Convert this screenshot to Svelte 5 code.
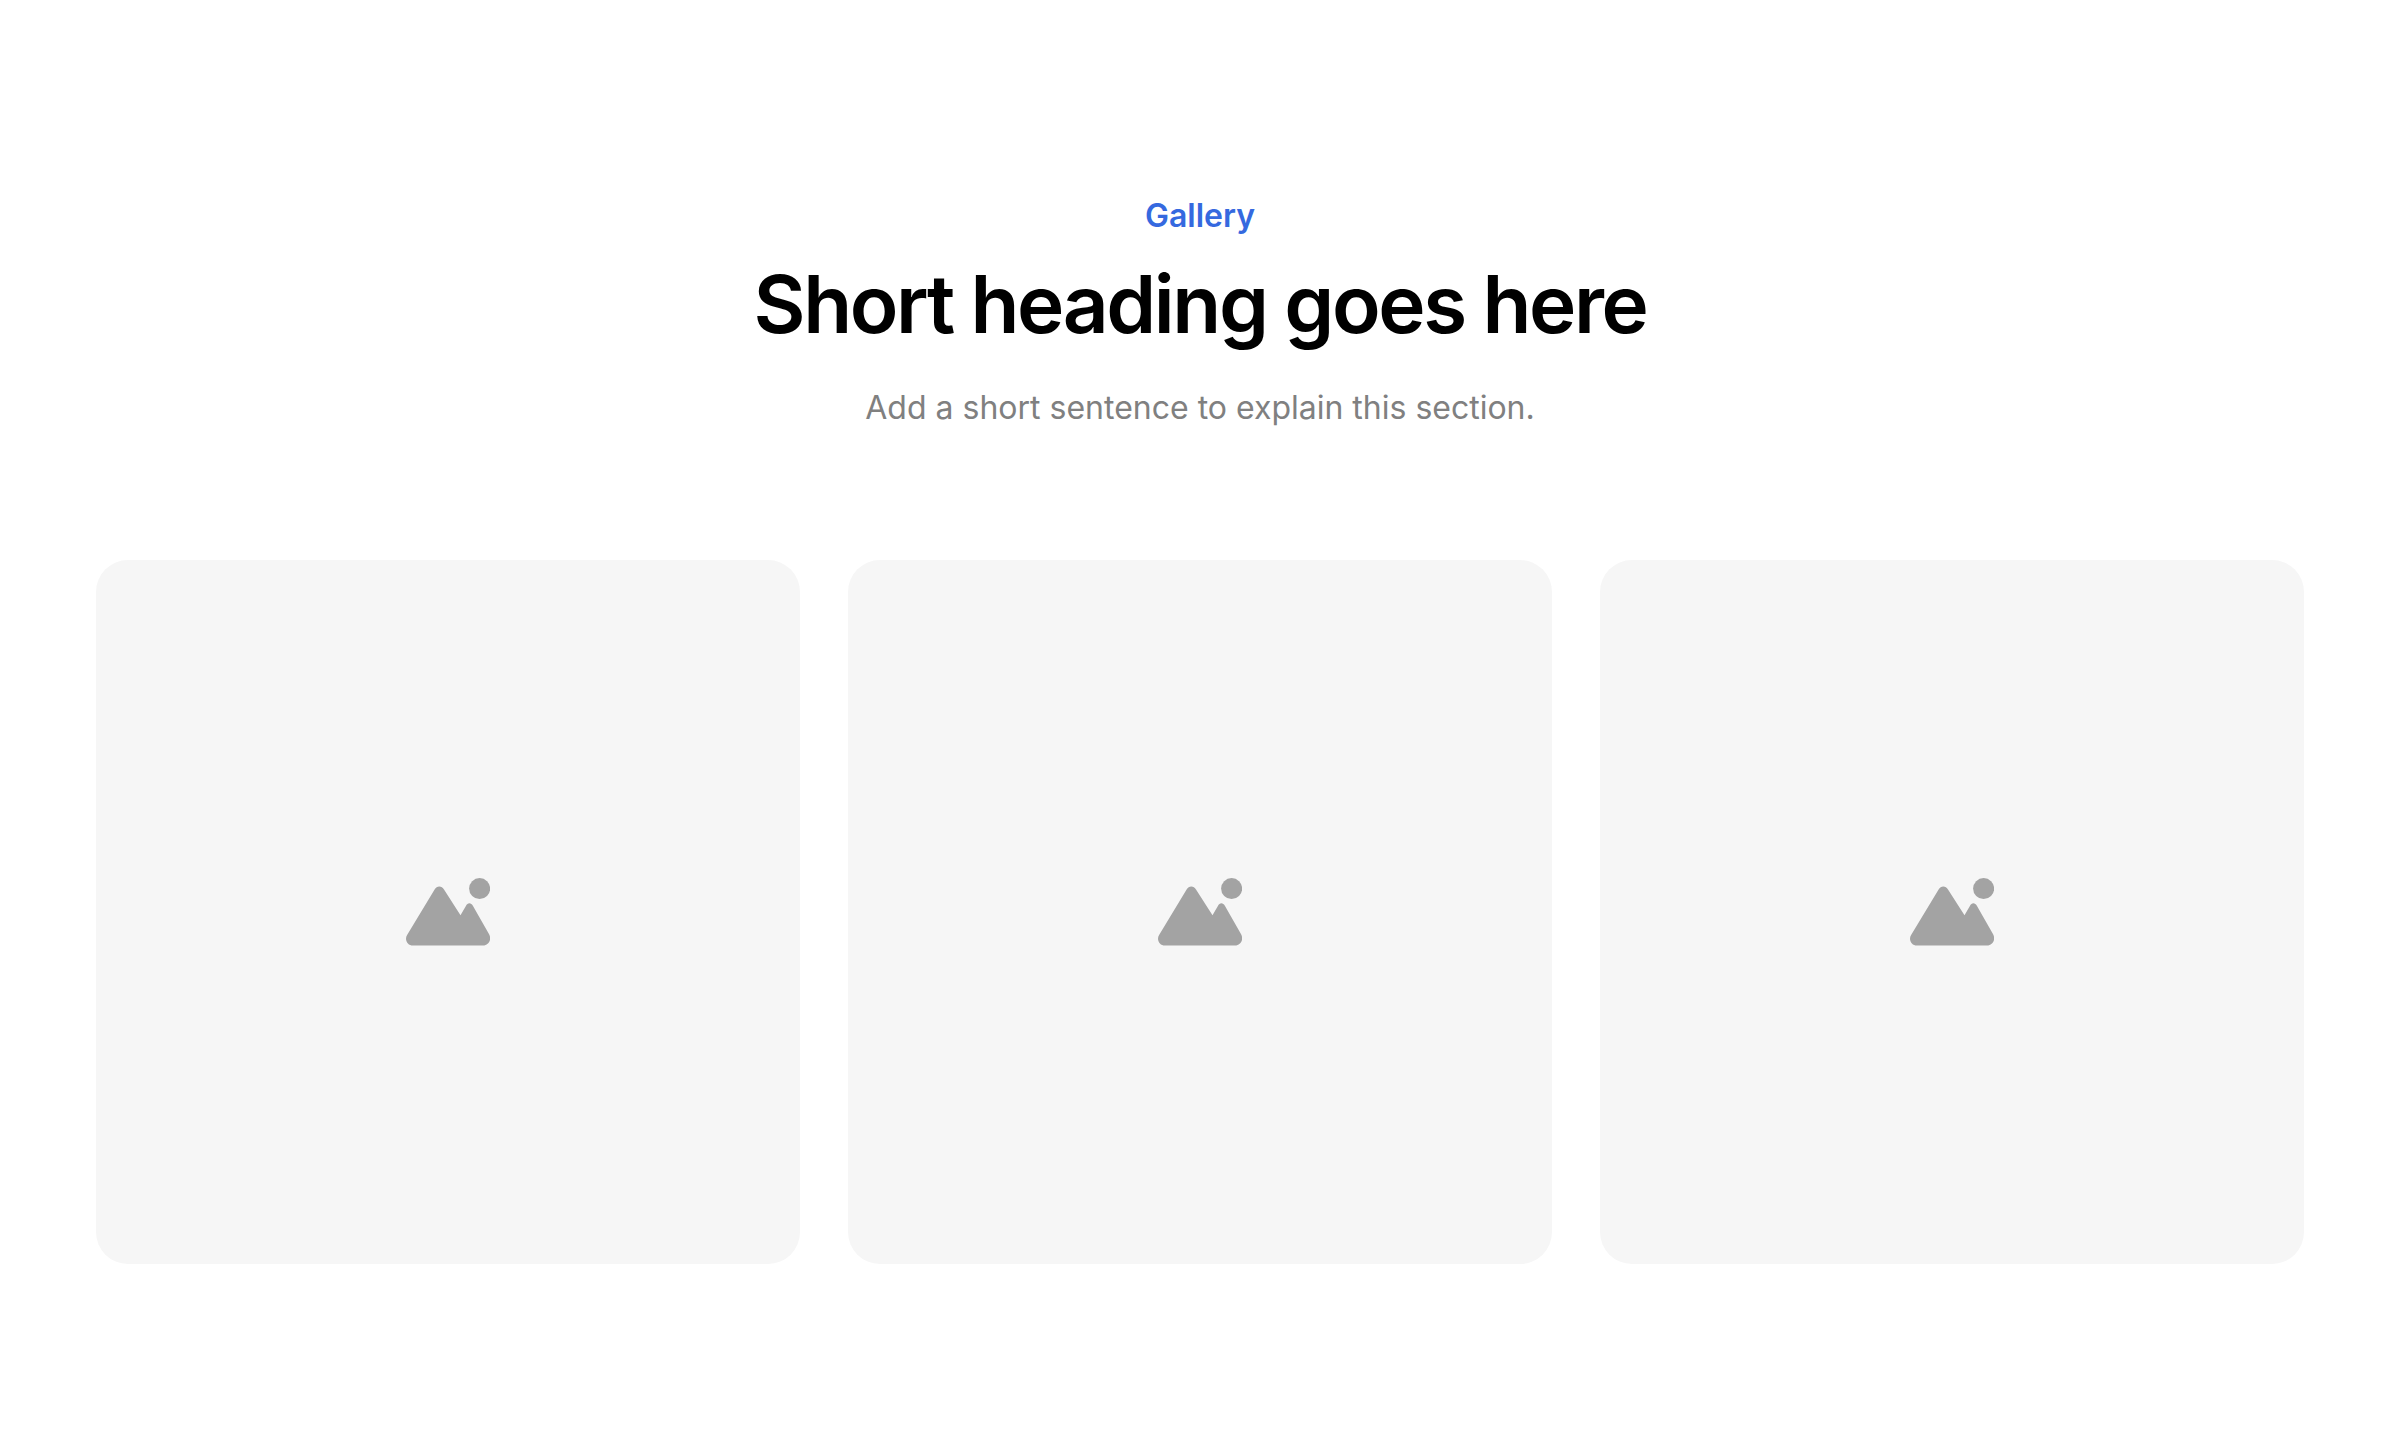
<script>
  const items = [1, 2, 3];
</script>

<section class="gallery">
  <header class="intro">
    <div class="eyebrow">Gallery</div>
    <h2>Short heading goes here</h2>
    <p>Add a short sentence to explain this section.</p>
  </header>

  <div class="grid">
    {#each items as item (item)}
      <div class="tile">
        <svg class="icon" viewBox="0 0 84 68" aria-hidden="true">
          <path
            d="M7 67.6C1.4 67.6 -1.8 61.7 1.1 57L28.6 11.6C30.8 7.6 35.8 7.6 38 11.6L54.5 37.3L59.9 28C61.6 24.2 65.1 24.2 67 28L83.1 56.3C86 61.5 82.6 67.6 77 67.6Z"
          />
          <circle cx="73.6" cy="10.6" r="10.5" />
        </svg>
      </div>
    {/each}
  </div>
</section>

<style>
  :global(body) {
    background: #ffffff;
  }

  .gallery {
    box-sizing: border-box;
    width: 100%;
    min-height: 1456px;
    padding: 192px 96px;
    font-family: Inter, sans-serif;
  }

  .intro {
    display: flex;
    flex-direction: column;
    align-items: center;
    text-align: center;
    margin-bottom: 128px;
  }

  .eyebrow {
    font-size: 32px;
    line-height: 48px;
    font-weight: 600;
    color: #3569df;
  }

  h2 {
    margin: 16px 0 32px;
    font-size: 80px;
    line-height: 96px;
    font-weight: 600;
    letter-spacing: -0.03em;
    color: #000000;
  }

  p {
    margin: 0;
    font-size: 32px;
    line-height: 48px;
    color: #808080;
  }

  .grid {
    display: grid;
    grid-template-columns: repeat(3, 1fr);
    gap: 48px;
  }

  .tile {
    display: flex;
    align-items: center;
    justify-content: center;
    aspect-ratio: 1;
    border-radius: 32px;
    background: #f6f6f6;
  }

  .icon {
    width: 84px;
    height: 68px;
    fill: #a3a3a3;
  }
</style>
